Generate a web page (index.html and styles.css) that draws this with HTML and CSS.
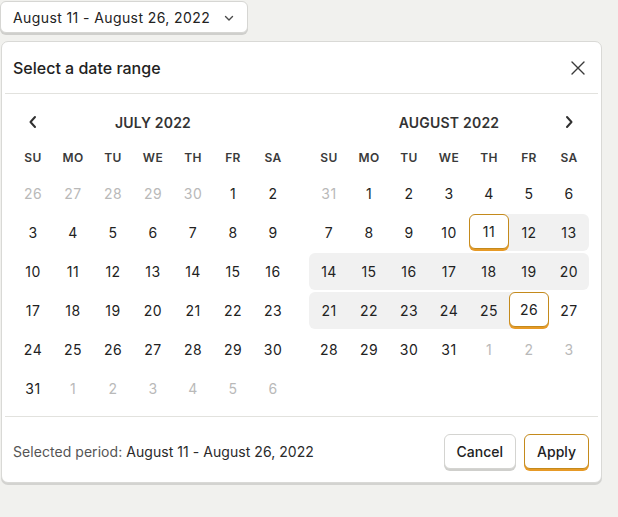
FILE: index.html
```html
<!DOCTYPE html>
<html lang="en">
<head>
<meta charset="utf-8">
<title>Date range</title>
<link rel="stylesheet" href="styles.css">
</head>
<body>
<div class="page">
  <button class="trigger" type="button">
    <span>August 11 - August 26, 2022</span>
    <svg class="chev-down" width="12" height="12" viewBox="0 0 12 12"><path d="M2.5 4.5 L6 8 L9.5 4.5" fill="none" stroke="#4a4a4a" stroke-width="1.4" stroke-linecap="round" stroke-linejoin="round"/></svg>
  </button>

  <div class="panel">
    <div class="panel-head">
      <h2 class="title">Select a date range</h2>
      <button class="close" type="button" aria-label="Close">
        <svg width="16" height="16" viewBox="0 0 16 16"><path d="M2 2 L14 14 M14 2 L2 14" stroke="#3a3a3a" stroke-width="1.4" stroke-linecap="round"/></svg>
      </button>
    </div>

    <div class="months">
      <div class="month">
        <div class="month-head">
          <button class="nav" type="button" aria-label="Previous month">
            <svg width="12" height="14" viewBox="0 0 12 14"><path d="M8 2 L3.5 7 L8 12" fill="none" stroke="#303030" stroke-width="2" stroke-linecap="round" stroke-linejoin="round"/></svg>
          </button>
          <span class="month-name">JULY 2022</span>
          <span class="nav"></span>
        </div>
        <div class="grid">
          <span class="wd">SU</span><span class="wd">MO</span><span class="wd">TU</span><span class="wd">WE</span><span class="wd">TH</span><span class="wd">FR</span><span class="wd">SA</span>
        </div>
        <div class="week"><span class="d out">26</span><span class="d out">27</span><span class="d out">28</span><span class="d out">29</span><span class="d out">30</span><span class="d">1</span><span class="d">2</span></div>
        <div class="week"><span class="d">3</span><span class="d">4</span><span class="d">5</span><span class="d">6</span><span class="d">7</span><span class="d">8</span><span class="d">9</span></div>
        <div class="week"><span class="d">10</span><span class="d">11</span><span class="d">12</span><span class="d">13</span><span class="d">14</span><span class="d">15</span><span class="d">16</span></div>
        <div class="week"><span class="d">17</span><span class="d">18</span><span class="d">19</span><span class="d">20</span><span class="d">21</span><span class="d">22</span><span class="d">23</span></div>
        <div class="week"><span class="d">24</span><span class="d">25</span><span class="d">26</span><span class="d">27</span><span class="d">28</span><span class="d">29</span><span class="d">30</span></div>
        <div class="week"><span class="d">31</span><span class="d out">1</span><span class="d out">2</span><span class="d out">3</span><span class="d out">4</span><span class="d out">5</span><span class="d out">6</span></div>
      </div>

      <div class="month">
        <div class="month-head">
          <span class="nav"></span>
          <span class="month-name">AUGUST 2022</span>
          <button class="nav" type="button" aria-label="Next month">
            <svg width="12" height="14" viewBox="0 0 12 14"><path d="M4 2 L8.5 7 L4 12" fill="none" stroke="#303030" stroke-width="2" stroke-linecap="round" stroke-linejoin="round"/></svg>
          </button>
        </div>
        <div class="grid">
          <span class="wd">SU</span><span class="wd">MO</span><span class="wd">TU</span><span class="wd">WE</span><span class="wd">TH</span><span class="wd">FR</span><span class="wd">SA</span>
        </div>
        <div class="week"><span class="d out">31</span><span class="d">1</span><span class="d">2</span><span class="d">3</span><span class="d">4</span><span class="d">5</span><span class="d">6</span></div>
        <div class="week"><span class="d">7</span><span class="d">8</span><span class="d">9</span><span class="d">10</span><span class="range"><span class="d sel">11</span><span class="d">12</span><span class="d">13</span></span></div>
        <div class="week"><span class="range"><span class="d">14</span><span class="d">15</span><span class="d">16</span><span class="d">17</span><span class="d">18</span><span class="d">19</span><span class="d">20</span></span></div>
        <div class="week"><span class="range"><span class="d">21</span><span class="d">22</span><span class="d">23</span><span class="d">24</span><span class="d">25</span><span class="d sel">26</span></span><span class="d">27</span></div>
        <div class="week"><span class="d">28</span><span class="d">29</span><span class="d">30</span><span class="d">31</span><span class="d out">1</span><span class="d out">2</span><span class="d out">3</span></div>
        <div class="week"></div>
      </div>
    </div>

    <div class="panel-foot">
      <p class="period"><span class="muted">Selected period:</span> August 11 - August 26, 2022</p>
      <div class="actions">
        <button class="btn" type="button">Cancel</button>
        <button class="btn primary" type="button">Apply</button>
      </div>
    </div>
  </div>
</div>
</body>
</html>
```

FILE: styles.css
```css
* { box-sizing: border-box; }
html, body {
  margin: 0;
  padding: 0;
  background: #f1f1ee;
  font-family: Inter, "Noto Sans", sans-serif;
  color: #2a2a2a;
}
.page {
  width: 618px;
  height: 517px;
  padding: 1px 0 0 0;
}
button {
  font-family: inherit;
  color: inherit;
  background: none;
  border: 0;
  padding: 0;
  cursor: pointer;
}
.trigger {
  display: flex;
  align-items: center;
  justify-content: space-between;
  width: 248px;
  height: 32px;
  padding: 0 10px 0 12px;
  background: #fff;
  border: 1px solid #d6d6d3;
  border-radius: 6px;
  box-shadow: 0 2px 0 #cfcfcc;
  font-size: 14px;
  color: #222;
  letter-spacing: 0.4px;
}
.chev-down { margin-right: 2px; margin-top: 1px; }

.panel {
  margin: 8px 0 0 1px;
  width: 601px;
  height: 442px;
  background: #fff;
  border: 1px solid #d9d9d6;
  border-radius: 7px;
  box-shadow: 0 2px 0 #d3d3d0;
  display: flex;
  flex-direction: column;
}
.panel-head {
  display: flex;
  align-items: center;
  justify-content: space-between;
  height: 52px;
  margin: 0 3px;
  padding: 0 12px 0 8px;
  border-bottom: 1px solid #e2e2de;
}
.title {
  margin: 0;
  font-size: 16px;
  font-weight: 500;
  color: #222;
}
.close { display: flex; width: 16px; height: 16px; }

.months {
  display: flex;
  gap: 16px;
  padding: 16px 9px 0 8px;
  height: 323px;
  margin: 0 3px;
  border-bottom: 1px solid #e2e2de;
}
.month { width: 280px; }
.month-head {
  display: flex;
  align-items: center;
  justify-content: space-between;
  height: 24px;
  padding: 0 14px;
}
.month-head .nav { display: flex; width: 12px; height: 14px; }
.month-name {
  font-size: 14px;
  font-weight: 600;
  color: #333;
  letter-spacing: 0.2px;
}
.grid, .week { display: flex; }
.grid { margin-top: 14px; height: 18px; align-items: center; }
.wd {
  width: 40px;
  text-align: center;
  font-size: 12px;
  font-weight: 600;
  color: #3a3a3a;
  letter-spacing: 0.4px;
}
.week { height: 37px; margin-top: 2px; }
.grid + .week { margin-top: 9px; }
.d {
  width: 40px;
  height: 37px;
  display: flex;
  align-items: center;
  justify-content: center;
  font-size: 14px;
  color: #222;
  letter-spacing: 0.5px;
  border-radius: 6px;
}
.d.out { color: #b9b9b9; }
.range {
  display: flex;
  background: #f1f1f1;
  border-radius: 6px;
}
.d.sel {
  background: #fff;
  border: 1px solid #c48a1c;
  box-shadow: 0 2px 0 #e79a26;
  height: 35px;
}
.panel-foot {
  flex: 1;
  display: flex;
  align-items: center;
  justify-content: space-between;
  padding: 3px 12px 0 11px;
}
.period {
  margin: 0;
  font-size: 14px;
  color: #2a2a2a;
  letter-spacing: 0.05px;
}
.muted { color: #555; }
.actions { display: flex; gap: 8px; }
.btn {
  height: 35px;
  padding: 0 12px;
  background: #fff;
  border: 1px solid #d4d4d1;
  border-radius: 6px;
  box-shadow: 0 2px 0 #cfcfcc;
  font-size: 14px;
  font-weight: 500;
  color: #222;
}
.btn.primary {
  border-color: #c48a1c;
  box-shadow: 0 2px 0 #e79a26;
}
```
